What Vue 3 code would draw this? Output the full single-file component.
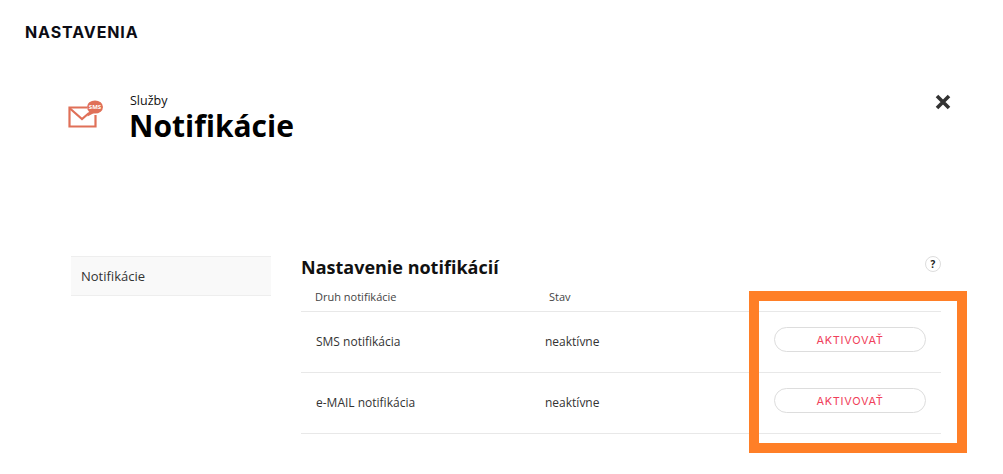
<template>
  <div class="page">
    <h1 class="page-title">NASTAVENIA</h1>

    <header class="head">
      <svg class="head-icon" width="36" height="28" viewBox="0 0 36 28">
        <path d="M19 7.5H1.5V26.5H27.5V15" fill="none" stroke="#e07058" stroke-width="2.2" />
        <path d="M2 8.5L14 19L21 13" fill="none" stroke="#e07058" stroke-width="2.2" />
        <ellipse cx="27" cy="7" rx="8" ry="6.6" fill="#e07058" />
        <path d="M21 11L19.5 16.5L26 13Z" fill="#e07058" />
        <text x="27" y="9" text-anchor="middle" class="sms">SMS</text>
      </svg>
      <div class="head-text">
        <div class="head-sub">Služby</div>
        <div class="head-main">Notifikácie</div>
      </div>
      <button class="close" aria-label="close">
        <svg width="16" height="16" viewBox="0 0 16 16">
          <path d="M2 2L14 14M14 2L2 14" stroke="#333" stroke-width="3.6" />
        </svg>
      </button>
    </header>

    <div class="body">
      <aside class="side">
        <div class="side-item">Notifikácie</div>
      </aside>
      <main class="main">
        <div class="main-head">
          <h2>Nastavenie notifikácií</h2>
          <span class="help">?</span>
        </div>
        <div class="thead">
          <span class="col-name">Druh notifikácie</span>
          <span class="col-state">Stav</span>
        </div>
        <div v-for="row in rows" :key="row.name" class="row">
          <span class="col-name">{{ row.name }}</span>
          <span class="col-state">{{ row.state }}</span>
          <button class="btn">AKTIVOVAŤ</button>
        </div>
      </main>
    </div>

    <div class="highlight"></div>
  </div>
</template>

<script setup>
const rows = [
  { name: 'SMS notifikácia', state: 'neaktívne' },
  { name: 'e-MAIL notifikácia', state: 'neaktívne' }
]
</script>

<style>
html, body {
  margin: 0;
  background: #fff;
}
</style>

<style scoped>
.page {
  position: relative;
  width: 1003px;
  height: 474px;
  overflow: hidden;
  font-family: "Open Sans", "Noto Sans", sans-serif;
  color: #222;
}
.page-title {
  margin: 0;
  padding: 23px 0 0 25px;
  font-family: Inter, "Open Sans", sans-serif;
  font-size: 16px;
  line-height: 18px;
  font-weight: 700;
  letter-spacing: 0.9px;
  color: #0c0c14;
}
.head {
  display: flex;
  align-items: flex-start;
  margin-top: 52px;
  padding: 0 52px 0 68px;
}
.head-icon {
  margin-top: 7px;
}
.head-text {
  margin-left: 26px;
  flex: 1;
}
.head-sub {
  font-size: 12.5px;
  line-height: 15px;
  color: #111;
}
.head-main {
  margin-left: -1px;
  font-size: 30px;
  line-height: 36px;
  font-weight: 700;
  color: #000;
}
.sms {
  font-family: "Open Sans", sans-serif;
  font-size: 6px;
  font-weight: 700;
  fill: #fff;
}
.close {
  margin-top: 1px;
  padding: 0;
  border: 0;
  background: none;
  line-height: 0;
}
.body {
  display: flex;
  margin-top: 112px;
  padding-left: 71px;
}
.side {
  width: 200px;
  flex: none;
}
.side-item {
  box-sizing: border-box;
  height: 40px;
  padding-left: 10px;
  line-height: 38px;
  font-size: 13px;
  color: #333;
  background: #f9f9f9;
  border-top: 1px solid #eee;
  border-bottom: 1px solid #eee;
}
.main {
  width: 640px;
  margin-left: 30px;
}
.main-head {
  display: flex;
  justify-content: space-between;
  height: 26px;
}
.main-head h2 {
  margin: -1px 0 0;
  font-size: 18px;
  line-height: 24px;
  font-weight: 700;
  color: #111;
}
.help {
  box-sizing: border-box;
  width: 16px;
  height: 16px;
  border: 1px solid #ddd;
  border-radius: 50%;
  text-align: center;
  font-size: 10px;
  line-height: 14px;
  font-weight: 700;
  color: #222;
}
.thead {
  display: flex;
  align-items: center;
  height: 30px;
  border-bottom: 1px solid #e8e8e8;
  box-sizing: border-box;
  font-size: 11px;
  color: #444;
}
.thead .col-name {
  width: 234px;
  margin-left: 14px;
}
.row {
  display: flex;
  align-items: center;
  box-sizing: border-box;
  height: 61px;
  padding-bottom: 1px;
  border-bottom: 1px solid #e8e8e8;
  font-size: 12px;
  color: #333;
}
.row .col-name {
  width: 229px;
  margin-left: 15px;
}
.row .col-state {
  width: 229px;
}
.btn {
  box-sizing: border-box;
  width: 152px;
  height: 25px;
  margin-bottom: 4px;
  padding: 0;
  background: #fff;
  border: 1px solid #ddd;
  border-radius: 13px;
  font-family: Inter, "Open Sans", sans-serif;
  font-size: 11px;
  font-weight: 400;
  letter-spacing: 0.7px;
  color: #f0405a;
}
.highlight {
  position: absolute;
  left: 749px;
  top: 291px;
  box-sizing: border-box;
  width: 218px;
  height: 162px;
  border: 10px solid #ff7f27;
}
</style>
